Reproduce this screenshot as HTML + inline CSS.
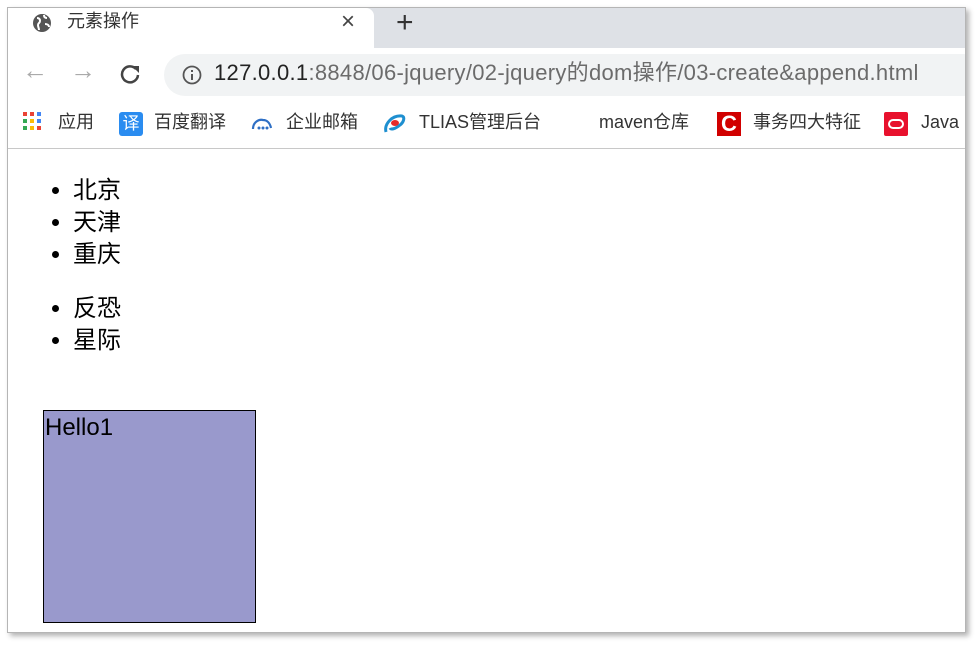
<!DOCTYPE html>
<html><head><meta charset="utf-8"><style>
*{margin:0;padding:0;box-sizing:border-box}
body{width:977px;height:645px;background:#fff;position:relative;overflow:hidden;font-family:"Liberation Sans","Noto Sans CJK SC",sans-serif}
.frame{position:absolute;left:7px;top:7px;width:959px;height:626px;border:1px solid #b5b5b5;box-shadow:3px 3px 5px rgba(0,0,0,.3);background:#fff;overflow:hidden}
.tabbar{position:absolute;left:0;top:0;width:100%;height:40px;background:#dee1e6}
.tab{position:absolute;left:0;top:0;width:366px;height:40px;background:#fff;border-radius:0 8px 0 0}
.abs{position:absolute;white-space:nowrap;line-height:1.2}
.toolbar{position:absolute;left:0;top:40px;width:100%;height:53px;background:#fff}
.omni{position:absolute;left:156px;top:6px;width:820px;height:42px;background:#f1f3f4;border-radius:21px}
.bm{position:absolute;top:93px;left:0;width:100%;height:48px;background:#fff;border-bottom:1px solid #c8c8c8;font-size:18px;color:#333}
ul{position:absolute;left:0;font-size:24px;line-height:32px;color:#000}
li{margin-left:65px;list-style:disc}
.box{position:absolute;left:35px;top:402px;width:213px;height:213px;background:#9999cc;border:1px solid #000;font-size:24px;line-height:34px;padding-left:1px}
</style></head><body>
<div class="frame">
 <div class="tabbar"><div class="tab"></div>
  <svg class="abs" style="left:24px;top:5px" width="20" height="20" viewBox="0 0 20 20"><circle cx="10" cy="10" r="9" fill="#555"/><path d="M5 5c2 0 3 1 3 3s-2 2-2 4 1 3 1 5M12 2c0 2 1 3 3 3M13 11c2 0 4 1 4 3" stroke="#fff" stroke-width="2" fill="none"/></svg>
  <div class="abs" style="left:59px;top:3px;font-size:18px;color:#333">元素操作</div>
  <div class="abs" style="left:333px;top:0px;font-size:24px;color:#444">×</div>
  <div class="abs" style="left:388px;top:-3px;font-size:30px;color:#333">+</div>
 </div>
 <div class="toolbar">
  <div class="abs" style="left:14px;top:7px;font-size:26px;color:#aaa">←</div>
  <div class="abs" style="left:62px;top:7px;font-size:26px;color:#aaa">→</div>
  <svg class="abs" style="left:111px;top:15px" width="22" height="22" viewBox="0 0 22 22"><path d="M17 6A8 8 0 1 0 19 12" stroke="#444" stroke-width="2.5" fill="none"/><path d="M13 3h7v7z" fill="#444"/></svg>
  <div class="omni">
   <svg class="abs" style="left:18px;top:11px" width="20" height="20" viewBox="0 0 20 20"><circle cx="10" cy="10" r="8.5" stroke="#555" stroke-width="1.8" fill="none"/><rect x="9" y="9" width="2" height="6" fill="#555"/><rect x="9" y="5" width="2" height="2" fill="#555"/></svg>
   <div class="abs" style="left:50px;top:6px;font-size:22px;letter-spacing:0.3px;color:#222">127.0.0.1<span style="color:#6b6b6b">:8848/06-jquery/02-jquery的dom操作/03-create&amp;append.html</span></div>
  </div>
 </div>
 <div class="bm">
  <svg class="abs" style="left:15px;top:11px" width="22" height="22" viewBox="0 0 22 22"><g><rect x="0" y="0" width="4" height="4" fill="#ea4335"/><rect x="7" y="0" width="4" height="4" fill="#ea4335"/><rect x="14" y="0" width="4" height="4" fill="#4285f4"/><rect x="0" y="7" width="4" height="4" fill="#34a853"/><rect x="7" y="7" width="4" height="4" fill="#fbbc05"/><rect x="14" y="7" width="4" height="4" fill="#4285f4"/><rect x="0" y="14" width="4" height="4" fill="#34a853"/><rect x="7" y="14" width="4" height="4" fill="#fbbc05"/><rect x="14" y="14" width="4" height="4" fill="#ea4335"/></g></svg>
  <div class="abs" style="left:50px;top:11px">应用</div>
  <div class="abs" style="left:111px;top:11px;width:24px;height:24px;background:#2a8cf0;border-radius:3px;color:#fff;font-size:17px;text-align:center;line-height:24px">译</div>
  <div class="abs" style="left:146px;top:11px">百度翻译</div>
  <svg class="abs" style="left:243px;top:16px" width="22" height="14" viewBox="0 0 22 14"><path d="M2 12C2 5 8 2 12 3c4 0 7 3 8 8" stroke="#2e6fc5" stroke-width="2.2" fill="none"/><circle cx="8" cy="11" r="1.5" fill="#2e6fc5"/><circle cx="12" cy="11" r="1.5" fill="#2e6fc5"/><circle cx="16" cy="11" r="1.5" fill="#2e6fc5"/></svg>
  <div class="abs" style="left:278px;top:11px">企业邮箱</div>
  <svg class="abs" style="left:374px;top:11px" width="24" height="24" viewBox="0 0 24 24"><path d="M4 20C2 12 10 3 20 4c3 1 2 6-2 9-5 4-9 5-10 3" stroke="#1e8fd0" stroke-width="3" fill="none"/><ellipse cx="13" cy="11" rx="4" ry="3" fill="#e52a2a"/></svg>
  <div class="abs" style="left:411px;top:11px">TLIAS管理后台</div>
  <div class="abs" style="left:591px;top:11px">maven仓库</div>
  <div class="abs" style="left:709px;top:11px;width:24px;height:24px;background:#d10000;color:#fff;font-weight:bold;font-size:22px;line-height:24px;text-align:center">C</div>
  <div class="abs" style="left:745px;top:11px">事务四大特征</div>
  <div class="abs" style="left:876px;top:11px;width:24px;height:24px;background:#e8112d;border-radius:2px"><div style="position:absolute;left:4px;top:7px;width:16px;height:10px;border:2.5px solid #fff;border-radius:5px"></div></div>
  <div class="abs" style="left:913px;top:11px">Java</div>
 </div>
 <ul style="top:167px"><li>北京</li><li>天津</li><li>重庆</li></ul>
 <ul style="top:285px"><li>反恐</li><li>星际</li></ul>
 <div class="box">Hello1</div>
</div>
</body></html>
